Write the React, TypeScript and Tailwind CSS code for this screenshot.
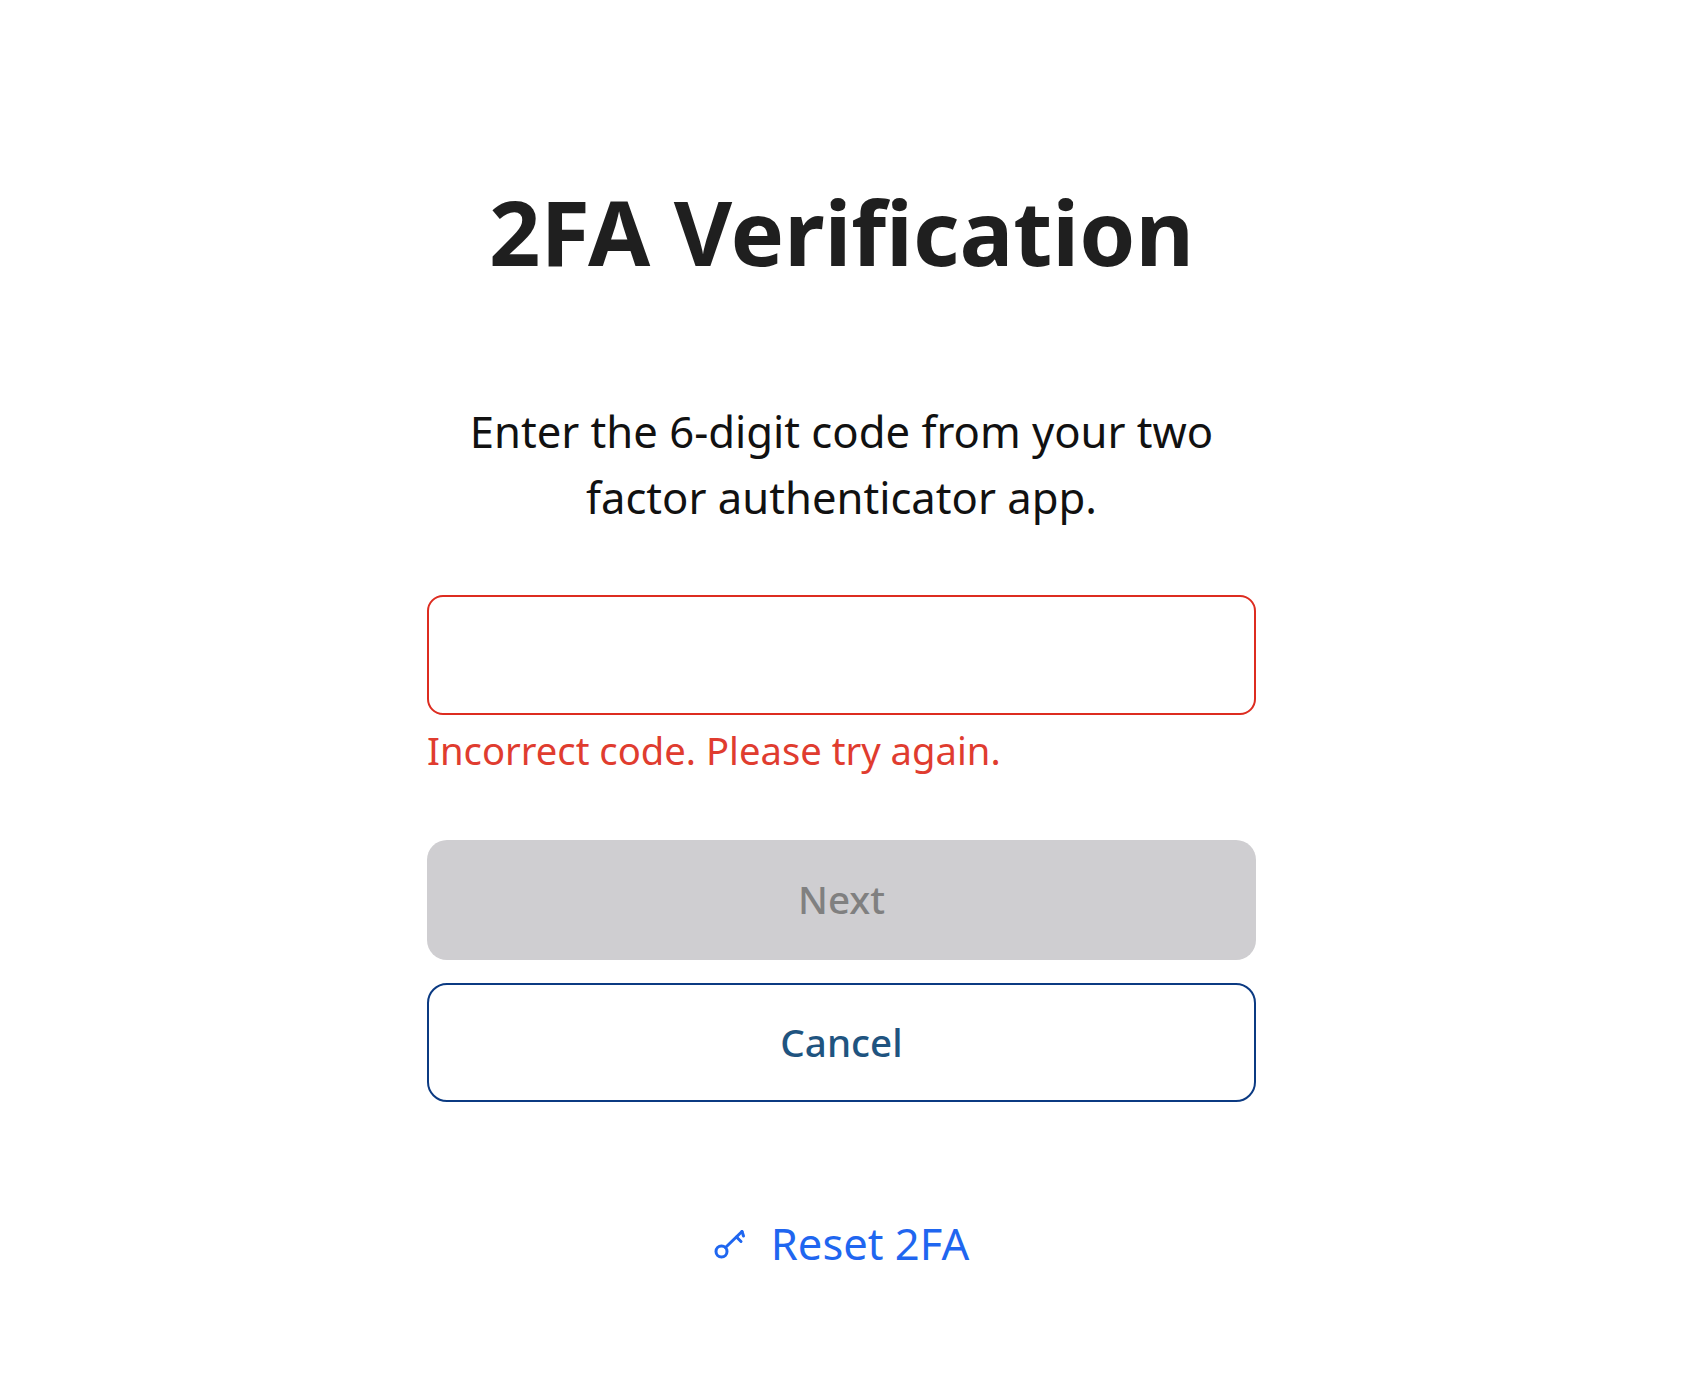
export default function App() {
  return (
    <div className="min-h-[1384px] bg-white flex justify-center pr-[11px] font-['Noto_Sans',sans-serif]">
      <div className="w-[829px] flex flex-col">
        <h1 className="mt-[173px] text-center text-[90px] leading-[116px] font-bold text-[#1f1f1f] whitespace-nowrap">
          2FA Verification
        </h1>
        <p className="mt-[109px] px-8 text-center text-[43.6px] leading-[66px] text-[#111111]">
          Enter the 6-digit code from your two factor authenticator app.
        </p>
        <input
          type="text"
          className="mt-[65px] h-[120px] w-full rounded-[16px] border-2 border-[#dd2c20] bg-white outline-none"
        />
        <p className="mt-[9px] text-[38.2px] leading-[52px] text-[#e03c2f]">Incorrect code. Please try again.</p>
        <button className="mt-[64px] h-[120px] w-full rounded-[20px] bg-[#cfced1] text-[38.6px] font-medium text-[#808080]">
          Next
        </button>
        <button className="mt-[23px] h-[119px] w-full rounded-[20px] border-2 border-[#0b3a82] bg-white text-[38.6px] font-medium text-[#1f5480]">
          Cancel
        </button>
        <a className="mt-[111px] flex items-center justify-center gap-[25px] text-[43.5px] leading-[60px] text-[#1f66f0]" href="#">
          <svg width="32" height="32" viewBox="0 0 32 32" fill="none" stroke="currentColor" strokeWidth="3" strokeLinecap="round">
            <circle cx="7.5" cy="24.5" r="5.5" />
            <path d="M11.5 20.5 28 4.5" />
            <path d="M22.5 10 27 14.5" />
            <path d="M28 4.5 29.5 9" />
          </svg>
          Reset 2FA
        </a>
      </div>
    </div>
  );
}
